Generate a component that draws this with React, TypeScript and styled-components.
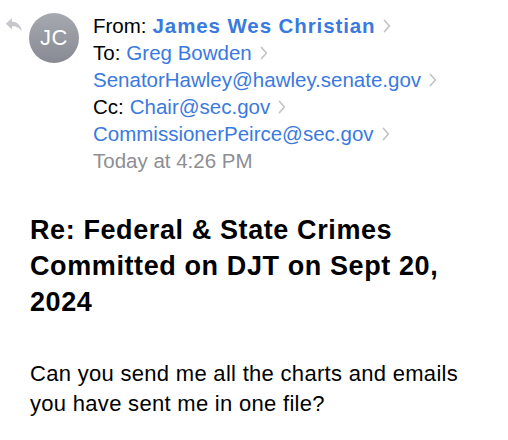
import React from 'react';
import styled, { createGlobalStyle } from 'styled-components';

const GlobalStyle = createGlobalStyle`
  html, body {
    margin: 0;
    padding: 0;
    background: #ffffff;
  }
  body {
    font-family: "Liberation Sans", Arial, sans-serif;
    -webkit-font-smoothing: antialiased;
  }
`;

type Recipient = { label?: string; name: string; bold?: boolean };

const headerLines: Recipient[] = [
    { label: 'From:', name: 'James Wes Christian', bold: true },
    { label: 'To:', name: 'Greg Bowden' },
    { name: 'SenatorHawley@hawley.senate.gov' },
    { label: 'Cc:', name: 'Chair@sec.gov' },
    { name: 'CommissionerPeirce@sec.gov' },
];

const ReplyIcon = () => (
    <svg width="18" height="16" viewBox="0 0 18 16">
        <path
            d="M7 1 L0.8 6.8 L7 12.6 L7 9.2 C11.2 9 14.2 10.4 17 14.6 C16.2 9 13.2 5 7 4.4 Z"
            fill="#c7c7cc"
        />
    </svg>
);

const Chevron = () => (
    <ChevronSvg width="8" height="14" viewBox="0 0 8 14">
        <path d="M1.5 1.5 L6.4 7 L1.5 12.5" fill="none" stroke="#c4c4c7" strokeWidth="1.7" strokeLinecap="round" strokeLinejoin="round" />
    </ChevronSvg>
);

const App = () => {
    return (
        <>
            <GlobalStyle />
            <Page>
                <Header>
                    <Reply>
                        <ReplyIcon />
                    </Reply>
                    <Avatar>JC</Avatar>
                    <HeaderLines>
                        {headerLines.map((line, i) => (
                            <HeaderLine key={i}>
                                {line.label && <Label>{line.label}</Label>}
                                <Name $bold={line.bold}>{line.name}</Name>
                                <Chevron />
                            </HeaderLine>
                        ))}
                        <Timestamp>Today at 4:26 PM</Timestamp>
                    </HeaderLines>
                </Header>
                <Subject>Re: Federal &amp; State Crimes Committed on DJT on Sept 20, 2024</Subject>
                <Body>Can you send me all the charts and emails you have sent me in one file?</Body>
            </Page>
        </>
    );
};

const Page = styled.div`
width: 508px;
height: 440px;
overflow: hidden;
box-sizing: border-box;
`;

const Header = styled.div`
display: flex;
align-items: flex-start;
padding: 12px 0 0 5px;
`;

const Reply = styled.div`
width: 18px;
padding-top: 5px;
margin-right: 6px;
`;

const Avatar = styled.div`
width: 50px;
height: 50px;
border-radius: 50%;
margin-top: 1px;
background: linear-gradient(180deg, #a6a9b0 0%, #878a92 100%);
color: #ffffff;
font-size: 22px;
display: flex;
align-items: center;
justify-content: center;
letter-spacing: 0.5px;
`;

const HeaderLines = styled.div`
display: flex;
flex-direction: column;
margin-left: 14px;
`;

const HeaderLine = styled.div`
display: flex;
align-items: center;
height: 27px;
font-size: 20.5px;
white-space: nowrap;
`;

const Label = styled.span`
color: #000000;
margin-right: 6px;
`;

const Name = styled.span<{ $bold?: boolean }>`
color: #3a7ae0;
font-weight: ${p => (p.$bold ? 700 : 400)};
letter-spacing: ${p => (p.$bold ? '0.9px' : '0')};
`;

const ChevronSvg = styled.svg`
margin-left: 8px;
margin-top: 1px;
`;

const Timestamp = styled.div`
height: 27px;
line-height: 27px;
font-size: 20.5px;
color: #8e8e93;
`;

const Subject = styled.h1`
margin: 38px 0 0 30px;
width: 440px;
font-size: 27px;
line-height: 36px;
font-weight: 700;
letter-spacing: 0.6px;
color: #000000;
`;

const Body = styled.p`
margin: 39px 0 0 30px;
width: 450px;
font-size: 22px;
line-height: 30px;
letter-spacing: 0.3px;
color: #000000;
`;
export default App;
